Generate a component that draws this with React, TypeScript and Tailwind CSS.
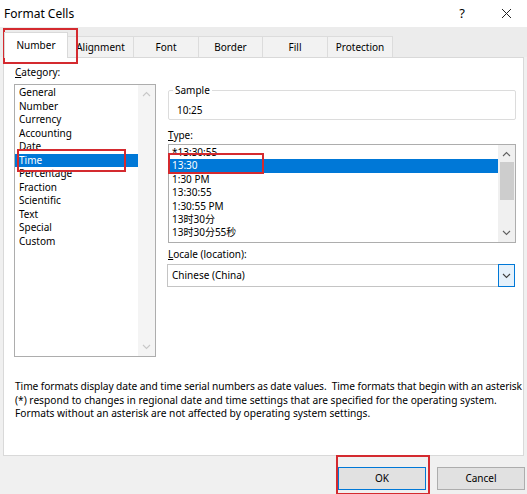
import React from "react";

const categories = [
  "General",
  "Number",
  "Currency",
  "Accounting",
  "Date",
  "Time",
  "Percentage",
  "Fraction",
  "Scientific",
  "Text",
  "Special",
  "Custom",
];

const types = ["*13:30:55", "13:30", "1:30 PM", "13:30:55", "1:30:55 PM", "13时30分", "13时30分55秒"];

const tabs = ["Alignment", "Font", "Border", "Fill", "Protection"];
const tabWidths = ["w-[66px]", "w-[65px]", "w-[64px]", "w-[65px]", "w-[65px]"];

function Chevron({ up, color = "#606060" }: { up?: boolean; color?: string }) {
  return (
    <svg width="9" height="6" viewBox="0 0 9 6" fill="none">
      <polyline
        points={up ? "1,5 4.5,1.5 8,5" : "1,1 4.5,4.5 8,1"}
        stroke={color}
        strokeWidth="1.1"
      />
    </svg>
  );
}

export default function App() {
  return (
    <div
      className="relative w-[527px] h-[494px] overflow-hidden bg-[#f0f0f0] text-[#000]"
      style={{ fontFamily: '"Noto Sans", "Noto Sans CJK SC", sans-serif' }}
    >
      {/* Title bar */}
      <div className="h-[27px] bg-white flex items-center">
        <span className="pl-[4px] text-[12px]">Format Cells</span>
        <span className="ml-auto text-[13px] mr-[36px]">?</span>
        <svg width="11" height="11" viewBox="0 0 11 11" className="mr-[15px]">
          <path d="M1 1 L10 10 M10 1 L1 10" stroke="#222" strokeWidth="1" />
        </svg>
      </div>

      {/* Tabs */}
      <div className="h-[30px] flex items-end pl-[4px] bg-[#ececec]">
        <div className="relative z-10 w-[64px] h-[26px] -mb-px bg-white border border-b-0 border-[#d9d9d9] flex items-center justify-center text-[10px]">
          Number
        </div>
        {tabs.map((t, i) => (
          <div
            key={t}
            className={`${tabWidths[i]} h-[21px] bg-[#f2f2f2] border border-b-0 border-l-0 border-[#dcdcdc] flex items-center justify-center text-[10px]`}
          >
            {t}
          </div>
        ))}
      </div>

      {/* Panel */}
      <div className="mx-[3px] h-[399px] bg-white border border-[#d9d9d9] flex flex-col">
        <div className="flex pl-[10px] pr-[7px]">
          {/* Category */}
          <div className="w-[142px] pt-[8px]">
            <div className="text-[10px] leading-[13px] pl-[1px]">
              <span className="underline">C</span>ategory:
            </div>
            <div className="mt-[5px] h-[273px] border border-[#adadad] flex">
              <div className="flex-1 pt-[1px]">
                {categories.map((c) => (
                  <div
                    key={c}
                    className={`h-[13.5px] leading-[13.5px] text-[10px] pl-[4px] ${
                      c === "Time" ? "bg-[#0078d7] text-white" : ""
                    }`}
                  >
                    {c}
                  </div>
                ))}
              </div>
              <div className="w-[17px] bg-[#f4f4f4] flex flex-col items-center justify-between py-[6px]">
                <Chevron up color="#c8c8c8" />
                <Chevron color="#c8c8c8" />
              </div>
            </div>
          </div>

          {/* Right column */}
          <div className="flex-1 ml-[12px] pt-[27px]">
            <fieldset className="h-[35px] border border-[#dcdcdc] rounded-[2px] pl-[4px] pr-[2px]">
              <legend className="text-[10px] leading-[10px] px-[2px] mt-[-1px]">Sample</legend>
              <div className="text-[10px] pl-[4px] mt-[9px] leading-[12px]">10:25</div>
            </fieldset>

            <div className="text-[10px] leading-[13px] mt-[9px]">
              <span className="underline">T</span>ype:
            </div>
            <div className="mt-[2px] h-[99px] border border-[#adadad] flex overflow-hidden">
              <div className="flex-1 pt-[1px]">
                {types.map((t, i) => (
                  <div
                    key={i}
                    className={`h-[13.4px] leading-[13.4px] text-[10px] pl-[3px] ${
                      i === 1 ? "bg-[#0078d7] text-white" : ""
                    }`}
                  >
                    {t}
                  </div>
                ))}
              </div>
              <div className="w-[17px] bg-[#f0f0f0] flex flex-col items-center py-[6px]">
                <Chevron up />
                <div className="mt-[5px] w-[14px] h-[38px] bg-[#cdcdcd]" />
                <div className="mt-auto">
                  <Chevron />
                </div>
              </div>
            </div>

            <div className="text-[10px] leading-[13px] mt-[5px]">
              <span className="underline">L</span>ocale (location):
            </div>
            <div className="mt-[3px] h-[23px] mr-[1px] ml-[-1px] border border-[#c4c4c4] flex">
              <div className="flex-1 text-[10px] leading-[21px] pl-[4px]">Chinese (China)</div>
              <div className="w-[17px] -my-px -mr-px bg-[#e5f1fb] border border-[#0078d7] flex items-center justify-center">
                <Chevron color="#404040" />
              </div>
            </div>
          </div>
        </div>

        <div className="mt-auto mb-[34px] pl-[11px] text-[10.2px] leading-[13.7px] whitespace-nowrap">
          <span className="tracking-[-0.08px]">
            Time formats display date and time serial numbers as date values.&nbsp; Time formats that begin with an asterisk
          </span>
          <br />
          (*) respond to changes in regional date and time settings that are specified for the operating system.
          <br />
          Formats without an asterisk are not affected by operating system settings.
        </div>
      </div>

      {/* Buttons */}
      <div className="flex justify-end gap-[11px] pt-[11px] pr-[2px]">
        <div className="w-[88px] h-[23px] bg-[#e1e1e1] border border-[#0078d7] flex items-center justify-center text-[10px]">
          OK
        </div>
        <div className="w-[88px] h-[23px] bg-[#e1e1e1] border border-[#adadad] flex items-center justify-center text-[10px]">
          Cancel
        </div>
      </div>

      {/* Red annotation boxes */}
      <div className="absolute left-[3px] top-[28px] w-[75px] h-[36px] border-2 border-[#d42a2f]" />
      <div className="absolute left-[17px] top-[149px] w-[109px] h-[23px] border-2 border-[#d42a2f]" />
      <div className="absolute left-[168px] top-[153px] w-[96px] h-[21px] border-2 border-[#d42a2f]" />
      <div className="absolute left-[336px] top-[455px] w-[94px] h-[40px] border-2 border-[#d42a2f]" />
    </div>
  );
}
